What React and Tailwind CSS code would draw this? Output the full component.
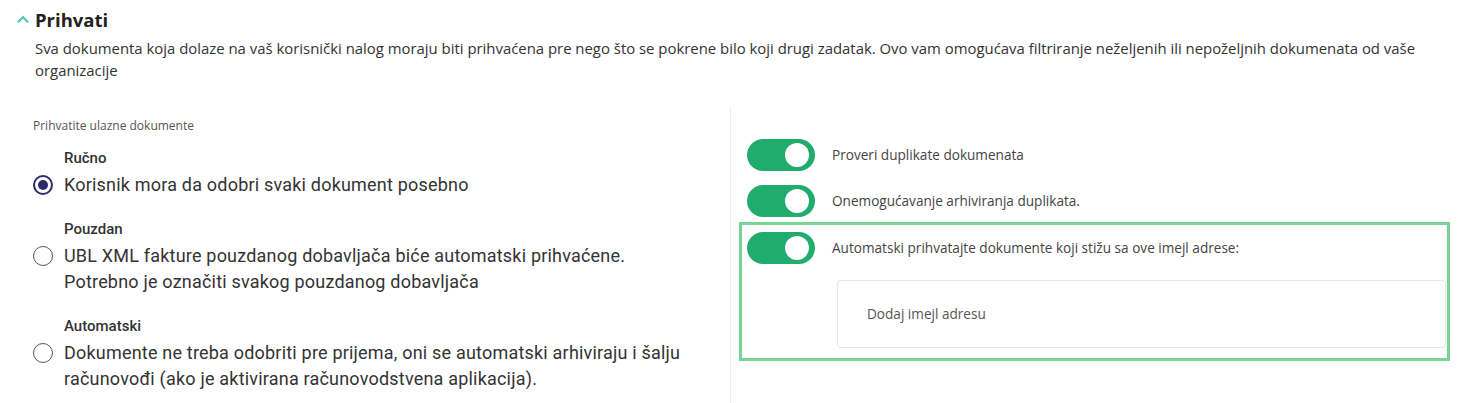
import { useState } from "react";

const options = [
    {
        id: "manual",
        title: "Ručno",
        text: "Korisnik mora da odobri svaki dokument posebno",
    },
    {
        id: "trusted",
        title: "Pouzdan",
        text: "UBL XML fakture pouzdanog dobavljača biće automatski prihvaćene. Potrebno je označiti svakog pouzdanog dobavljača",
    },
    {
        id: "auto",
        title: "Automatski",
        text: "Dokumente ne treba odobriti pre prijema, oni se automatski arhiviraju i šalju računovođi (ako je aktivirana računovodstvena aplikacija).",
    },
];

const Toggle = ({ on, onClick }) => (
    <button
        onClick={onClick}
        className={`relative w-[68px] h-[32px] rounded-full shrink-0 ${on ? "bg-[#20ac6c]" : "bg-gray-300"}`}
    >
        <span
            className={`absolute top-[4px] w-[24px] h-[24px] rounded-full bg-white ${on ? "left-[38px]" : "left-[6px]"}`}
        ></span>
    </button>
);

const App = () => {
    const [selected, setSelected] = useState("manual");
    const [dupCheck, setDupCheck] = useState(true);
    const [dupBlock, setDupBlock] = useState(true);
    const [autoAccept, setAutoAccept] = useState(true);

    return (
        <div className="w-[1464px] h-[403px] bg-white text-[#333] font-['Open_Sans',sans-serif] overflow-hidden">
            {/* Header */}
            <div className="pl-[17px] pt-[7px] flex items-center gap-[6px]">
                <svg width="12" height="8" viewBox="0 0 12 8" className="mt-[-2px]">
                    <path d="M0 6.5 L6 0.5 L12 6.5 L10.3 8 L6 3.7 L1.7 8 Z" fill="#5fc5b8" />
                </svg>
                <h2 className="text-[18.5px] leading-[26px] font-bold text-[#222]">Prihvati</h2>
            </div>
            <p className="pl-[35px] pr-[30px] pt-[4px] text-[14.9px] leading-[22px] text-[#333]">
                Sva dokumenta koja dolaze na vaš korisnički nalog moraju biti prihvaćena pre nego što se pokrene bilo koji drugi zadatak. Ovo vam omogućava filtriranje neželjenih ili nepoželjnih dokumenata od vaše organizacije
            </p>

            <div className="flex mt-[26px]">
                {/* Left column */}
                <div className="w-[731px] border-r border-[#ececec] pl-[33px] pt-[10px] h-[300px]">
                    <div className="text-[12px] leading-[18px] text-[#555]">Prihvatite ulazne dokumente</div>
                    <div className="flex flex-col gap-[21px] mt-[13px] font-['Roboto',sans-serif]">
                        {options.map((opt) => (
                            <div key={opt.id} className="cursor-pointer" onClick={() => setSelected(opt.id)}>
                                <div className="pl-[31px] text-[15px] leading-[20px] font-medium text-[#333]">{opt.title}</div>
                                <div className="flex gap-[11px] mt-[4px]">
                                    <div className="h-[26px] flex items-center shrink-0">
                                        {selected === opt.id ? (
                                            <span className="w-[20px] h-[20px] rounded-full border-2 border-[#2e2a6c] flex items-center justify-center">
                                                <span className="w-[10px] h-[10px] rounded-full bg-[#2e2a6c]"></span>
                                            </span>
                                        ) : (
                                            <span className="w-[20px] h-[20px] rounded-full border-[1.5px] border-[#555]"></span>
                                        )}
                                    </div>
                                    <p className="text-[18px] leading-[26px] tracking-[0.2px] text-[#333] max-w-[630px]">{opt.text}</p>
                                </div>
                            </div>
                        ))}
                    </div>
                </div>

                {/* Right column */}
                <div className="flex-1 pl-[8px] pr-[14px] pt-[32px]">
                    <div className="flex flex-col gap-[14px] pl-[8px]">
                        <div className="flex items-center gap-[17px]">
                            <Toggle on={dupCheck} onClick={() => setDupCheck(!dupCheck)} />
                            <span className="text-[13.6px] text-[#444]">Proveri duplikate dokumenata</span>
                        </div>
                        <div className="flex items-center gap-[17px]">
                            <Toggle on={dupBlock} onClick={() => setDupBlock(!dupBlock)} />
                            <span className="text-[13.6px] text-[#444]">Onemogućavanje arhiviranja duplikata.</span>
                        </div>
                    </div>
                    <div className="mt-[5px] border-[3px] border-[#7ad394] pt-[7px] pl-[5px] pr-[1px] pb-[10px]">
                        <div className="flex items-center gap-[17px]">
                            <Toggle on={autoAccept} onClick={() => setAutoAccept(!autoAccept)} />
                            <span className="text-[13.6px] text-[#444]">Automatski prihvatajte dokumente koji stižu sa ove imejl adrese:</span>
                        </div>
                        <div className="ml-[90px] mt-[16px] h-[68px] border border-[#e6e6e6] rounded-[4px] flex items-center pl-[29px]">
                            <input
                                className="w-full outline-none text-[13.6px] text-[#444] placeholder:text-[#555] bg-transparent"
                                placeholder="Dodaj imejl adresu"
                            />
                        </div>
                    </div>
                </div>
            </div>
        </div>
    );
};

export default App;
